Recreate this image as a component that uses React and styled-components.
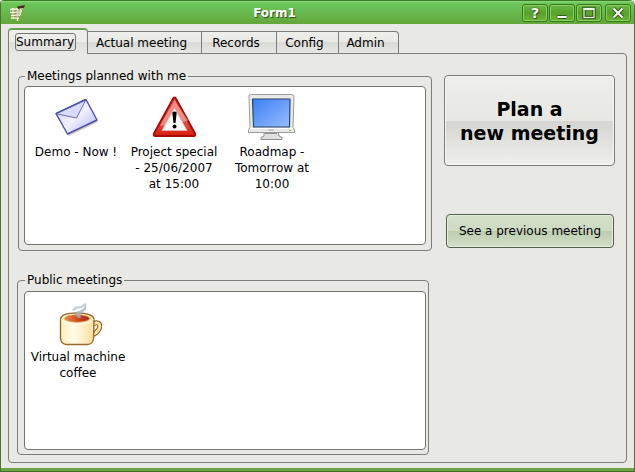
import React, { useState } from "react";
import styled, { createGlobalStyle } from "styled-components";

const GlobalStyle = createGlobalStyle`
  * { box-sizing: border-box; }
  body {
    margin: 0;
    background: #e8e8e4;
    color: #000;
    font: 12px/16px "DejaVu Sans", sans-serif;
  }
  button { font: inherit; color: inherit; }
`;

const Window = styled.div`
  display: flex;
  flex-direction: column;
  min-height: 100vh;
  border: 1px solid #4b7430;
  border-top: 0;
  border-radius: 4px 6px 0 0;
  border-bottom-color: #3f6b22;
  background: #e8e8e4;
  overflow: hidden;
`;

const TitleBar = styled.header`
  display: flex;
  align-items: center;
  height: 24px;
  padding: 0 3px 0 8px;
  border-top: 1px solid #3c7a2b;
  background: linear-gradient(#8fdc79 0, #6cc55b 2px, #6abf54 8px, #64a63a 100%);
`;

const Title = styled.h1`
  flex: 1;
  margin: 0;
  text-align: center;
  color: #fff;
  font-size: 12px;
  line-height: 16px;
  font-weight: bold;
  text-shadow: 1px 1px 1px #2b5216;
`;

const WindowControls = styled.div`
  display: flex;
  gap: 1px;
`;

const WindowButton = styled.button`
  width: 26px;
  height: 18px;
  padding: 0;
  margin-left: ${(p) => (p.$apart ? 2 : 0)}px;
  border: 1px solid #37771b;
  border-radius: 3px;
  background: linear-gradient(#6cb84a, #58a02c 50%, #6cb53a);
  box-shadow: inset 0 0 0 1px #86d25c;
  color: #fff;
  font-size: 14px;
  line-height: 16px;
  font-weight: bold;
  text-shadow: 0 0 2px #2e5a17, 1px 1px 1px #2e5a17;
  svg { display: block; margin: 0 auto; }
`;

const Content = styled.main`
  flex: 1;
  display: flex;
  flex-direction: column;
  padding: 4px 7px 5px;
`;

const TabBar = styled.div`
  display: flex;
  align-items: flex-end;
  height: 26px;
`;

const Tab = styled.button`
  height: ${(p) => (p.$active ? 26 : 23)}px;
  width: ${(p) => p.$width}px;
  padding: 0;
  white-space: nowrap;
  border: 1px solid #7c7d78;
  border-left-width: ${(p) => (p.$active ? 1 : 0)}px;
  border-top: ${(p) => (p.$active ? "2px solid #669f52" : "1px solid #7c7d78")};
  border-bottom-width: ${(p) => (p.$active ? 0 : 1)}px;
  border-radius: ${(p) => (p.$active ? "4px 4px 0 0" : "0")};
  background: ${(p) =>
    p.$active
      ? "linear-gradient(#eeeeeb, #ecece8 50%, #dededa 50%, #e8e8e4)"
      : "linear-gradient(#eeeeea, #e8e8e4 50%, #d9d9d5 50%, #e7e7e3)"};
  outline: none;
  &:last-child { border-top-right-radius: 4px; }
`;

/* Leaves the pane's top line open beneath the selected tab. */
const SelectedTab = styled(Tab)`
  position: relative;
  z-index: 1;
`;

const TabLabel = styled.span`
  display: block;
  margin: 0 11px 0 6px;
  border: 1px solid #777;
  border-radius: 3px;
  text-align: left;
`;

const PlainLabel = styled.span`
  display: block;
  padding-right: 6px;
`;

const Pane = styled.section`
  flex: 1;
  display: grid;
  grid-template-columns: minmax(0, 1fr) 171px;
  gap: 12px;
  margin-top: -1px;
  padding: 15px 11px 7px 8px;
  border: 1px solid #7c7d78;
  border-radius: 0 4px 4px 4px;
`;

const Groups = styled.div`
  display: flex;
  flex-direction: column;
  gap: 22px;
`;

const Group = styled.fieldset`
  flex: 1;
  display: flex;
  flex-direction: column;
  min-width: 0;
  margin: ${(p) => (p.$narrow ? "0 3px 0 0" : "0 0 0 1px")};
  padding: ${(p) => (p.$narrow ? "4px 2px 4px 6px" : "3px 5px 5px")};
  border: 1px solid #7c7d78;
  border-radius: 4px;
`;

const Legend = styled.legend`
  margin-left: 1px;
  padding: 0 2px;
  line-height: 14px;
`;

const MeetingList = styled.ul`
  flex: 1;
  display: flex;
  flex-wrap: wrap;
  align-content: flex-start;
  margin: 0;
  padding: 6px 2px;
  list-style: none;
  border: 1px solid #747571;
  border-radius: 4px;
  background: #fff;
`;

const Meeting = styled.li`
  width: ${(p) => p.$width}px;
  text-align: center;
  svg { display: block; margin: 0 auto 3px; }
`;

const Actions = styled.div`
  display: flex;
  flex-direction: column;
  padding-top: 6px;
  gap: 48px;
`;

const PlanButton = styled.button`
  height: 91px;
  padding: 0;
  border: 1px solid #7c7d78;
  border-radius: 4px;
  box-shadow: inset 0 0 0 1px #f6f6f3;
  background: linear-gradient(#eeeeea, #e7e7e3 50%, #d4d4d0 50%, #efefeb);
  font-size: 19px;
  line-height: 24px;
  font-weight: bold;
`;

const PreviousButton = styled.button`
  height: 34px;
  margin: 0 1px 0 2px;
  padding: 0;
  white-space: nowrap;
  border: 1px solid #56604f;
  border-radius: 4px;
  box-shadow: inset 0 0 0 1px #e3eddc;
  background: linear-gradient(#d3dfca, #cddbc3 50%, #bccdaf 50%, #d2e0c8);
`;

const BottomEdge = styled.footer`
  height: 3px;
  background: #6fa244;
`;

const AppIcon = () => (
  <svg width="18" height="18" viewBox="0 0 18 18" aria-hidden="true">
    <g fill="none" stroke="#fff3e6" strokeWidth="1.600">
      <path d="M1 5.500l6-.5 7-1M1 8.500l6-.5 6-1M2 11.500l5-.5 5-1M2 14h8" />
      <path d="M4 4v10M8.500 4v13M12 4l-1.500 8" strokeWidth="1.400" />
    </g>
    <path d="M8 2.500l8-1.500-1 3-6 1z" fill="#43301f" />
    <path d="M2 7h10M2 10h9M3 12.800h7" stroke="#a86f55" strokeWidth=".6" />
  </svg>
);

const Glyph = ({ children }) => (
  <svg width="16" height="14" viewBox="0 0 16 14" fill="none" aria-hidden="true">
    <g stroke="#2e5a17" strokeWidth="4">{children}</g>
    <g stroke="#fff" strokeWidth="2">{children}</g>
  </svg>
);

const MinimizeGlyph = () => (
  <Glyph>
    <path d="M3.500 11h9" />
  </Glyph>
);
const MaximizeGlyph = () => (
  <svg width="16" height="14" viewBox="0 0 16 14" fill="none" aria-hidden="true">
    <rect x="3" y="2.500" width="10" height="9" stroke="#2e5a17" strokeWidth="3.500" />
    <rect x="3" y="2.500" width="10" height="9" stroke="#dcebd2" strokeWidth="1.300" />
    <path d="M2.500 3h11" stroke="#eef6e9" strokeWidth="2" />
  </svg>
);
const CloseGlyph = () => (
  <Glyph>
    <path d="M3.500 2.500l9 9M12.500 2.500l-9 9" />
  </Glyph>
);

const EnvelopeIcon = () => (
  <svg width="48" height="48" viewBox="0 0 48 48" aria-hidden="true">
    <defs>
      <linearGradient id="paper" x1="0" y1="0" x2="1" y2="1">
        <stop offset="0" stopColor="#c5c8f4" />
        <stop offset=".5" stopColor="#f1f2ff" />
        <stop offset="1" stopColor="#a9b0ea" />
      </linearGradient>
    </defs>
    <path d="M17 43l29-14-2-3-29 14z" fill="#aaa" opacity=".6" />
    <path d="M4 20.700L34 6.500l11 20.500-29.500 14z" fill="url(#paper)" stroke="#4d50a4" strokeWidth="1.400" strokeLinejoin="round" />
    <path d="M4 20.700L34 6.500 24.500 25z" fill="#d9dcfa" stroke="#6a6dbb" strokeLinejoin="round" />
    <path d="M4 20.700L34 6.500" stroke="#4d50a4" strokeWidth="1.400" />
  </svg>
);

const WarningIcon = () => (
  <svg width="48" height="48" viewBox="0 0 48 48" aria-hidden="true">
    <defs>
      <linearGradient id="red" x1="0" y1="0" x2="0" y2="1">
        <stop offset="0" stopColor="#e8564a" />
        <stop offset=".6" stopColor="#e2584c" />
        <stop offset="1" stopColor="#d91a0b" />
      </linearGradient>
    </defs>
    <path d="M23.200 5.500L4 40.500Q3 43 5.500 43h38q2.500 0 1.500-2.500L25.800 5.500q-1.300-2-2.600 0z" fill="url(#red)" stroke="#a80c08" strokeWidth="2" strokeLinejoin="round" />
    <path d="M24.500 7.500L10 33q15-2 28-5.500z" fill="#f5a8a0" opacity=".65" />
    <path d="M24.500 15L12 37.500h25z" fill="#fafafa" stroke="#e3b5b0" strokeWidth=".8" strokeLinejoin="round" />
    <path d="M22.300 19.500q2.200-2 4.400 0L25.500 30h-2z" fill="#000" />
    <circle cx="24.500" cy="33.500" r="2" fill="#000" />
  </svg>
);

const MonitorIcon = () => (
  <svg width="48" height="48" viewBox="0 0 48 48" aria-hidden="true">
    <defs>
      <linearGradient id="screen" x1="0" y1="0" x2="1" y2="1">
        <stop offset="0" stopColor="#3a80f4" />
        <stop offset=".5" stopColor="#6a9dfa" />
        <stop offset="1" stopColor="#97bdfd" />
      </linearGradient>
    </defs>
    <path d="M16 38h14l1 5 3 1.500v2H13v-2l3-1.500z" fill="#e0e0e0" stroke="#8a8c8d" />
    <path d="M17 40h12" stroke="#777" strokeWidth="1.500" />
    <path d="M2.500 1.500h41q2.500 0 2.500 2L45 34.500l1.500 2.500v2.500H.500V37l1.500-2.500L1 3.500q-.5-2 1.500-2z" fill="#e9e9e7" stroke="#9a9c9c" strokeLinejoin="round" />
    <path d="M2 35.500h43" stroke="#fff" />
    <path d="M4.500 6h37.500l-.5 28H5.500z" fill="url(#screen)" stroke="#29456f" strokeWidth="1.200" strokeLinejoin="round" />
    <path d="M20 37h6" stroke="#aaa" />
    <path d="M41 37.500h2" stroke="#6cc040" />
  </svg>
);

const CoffeeIcon = () => (
  <svg width="48" height="48" viewBox="0 0 48 48" aria-hidden="true">
    <defs>
      <linearGradient id="cup" x1="0" y1="0" x2="1" y2="0">
        <stop offset="0" stopColor="#fff0c0" />
        <stop offset=".4" stopColor="#fffbe8" />
        <stop offset="1" stopColor="#fbe0a0" />
      </linearGradient>
      <linearGradient id="coffee" x1="0" y1="0" x2="1" y2="0">
        <stop offset="0" stopColor="#ee8a3c" />
        <stop offset=".6" stopColor="#c8431c" />
        <stop offset="1" stopColor="#a92d14" />
      </linearGradient>
    </defs>
    <path d="M39 27q2-3 5-2 3 1.500 1 6-2.500 4.500-7 6" fill="none" stroke="#8f5f25" strokeWidth="5" />
    <path d="M39 27q2-3 5-2 3 1.500 1 6-2.500 4.500-7 6" fill="none" stroke="#fbe3ae" strokeWidth="2.800" />
    <path d="M6.500 21q1-6 16.500-6t17 6l-.5 20q-.5 5-6 5.500H12q-5-1-5.500-6z" fill="url(#cup)" stroke="#9b6a28" strokeWidth="1.400" />
    <path d="M7.500 21q2 5 15.500 5t16-5" fill="none" stroke="#fff8dc" strokeWidth="1.500" />
    <ellipse cx="23" cy="20.500" rx="12.500" ry="3.700" fill="url(#coffee)" stroke="#cf9a55" strokeWidth=".8" />
    <path d="M24 20q-5-5 0-7 6-1 8-7 1.500 5-3 8-4 2-2 6z" fill="#aab0b8" opacity=".8" />
    <path d="M19 12q3-3 8-3l5-3" fill="none" stroke="#b4bac2" strokeWidth="2.500" opacity=".7" />
  </svg>
);

const TABS = [
  ["Summary", 80],
  ["Actual meeting", 114],
  ["Records", 75],
  ["Config", 62],
  ["Admin", 60],
];

const PLANNED = [
  { icon: EnvelopeIcon, lines: ["Demo - Now !"] },
  { icon: WarningIcon, lines: ["Project special", "- 25/06/2007", "at 15:00"] },
  { icon: MonitorIcon, lines: ["Roadmap -", "Tomorrow at", "10:00"] },
];

const PUBLIC = [{ icon: CoffeeIcon, lines: ["Virtual machine", "coffee"] }];

const MeetingGroup = ({ title, meetings, itemWidth, narrow }) => (
  <Group $narrow={narrow}>
    <Legend>{title}</Legend>
    <MeetingList>
      {meetings.map(({ icon: Icon, lines }) => (
        <Meeting key={lines[0]} $width={itemWidth}>
          <Icon />
          {lines.map((line, i) => (
            <React.Fragment key={line}>
              {i > 0 && <br />}
              {line}
            </React.Fragment>
          ))}
        </Meeting>
      ))}
    </MeetingList>
  </Group>
);

export default function App() {
  const [active, setActive] = useState("Summary");
  return (
    <>
      <GlobalStyle />
      <Window>
        <TitleBar>
          <AppIcon />
          <Title>Form1</Title>
          <WindowControls>
            <WindowButton aria-label="Help">?</WindowButton>
            <WindowButton aria-label="Minimize"><MinimizeGlyph /></WindowButton>
            <WindowButton aria-label="Maximize"><MaximizeGlyph /></WindowButton>
            <WindowButton aria-label="Close" $apart><CloseGlyph /></WindowButton>
          </WindowControls>
        </TitleBar>
        <Content>
          <TabBar role="tablist">
            {TABS.map(([name, width]) => {
              const isActive = name === active;
              const Part = isActive ? SelectedTab : Tab;
              const Label = isActive ? TabLabel : PlainLabel;
              return (
                <Part
                  key={name}
                  role="tab"
                  aria-selected={isActive}
                  $active={isActive}
                  $width={width}
                  onClick={() => setActive(name)}
                >
                  <Label>{name}</Label>
                </Part>
              );
            })}
          </TabBar>
          <Pane role="tabpanel" aria-label={active}>
            <Groups>
              <MeetingGroup title="Meetings planned with me" meetings={PLANNED} itemWidth={98} />
              <MeetingGroup title="Public meetings" meetings={PUBLIC} itemWidth={102} narrow />
            </Groups>
            <Actions>
              <PlanButton>
                Plan a<br />new meeting
              </PlanButton>
              <PreviousButton>See a previous meeting</PreviousButton>
            </Actions>
          </Pane>
        </Content>
        <BottomEdge />
      </Window>
    </>
  );
}
